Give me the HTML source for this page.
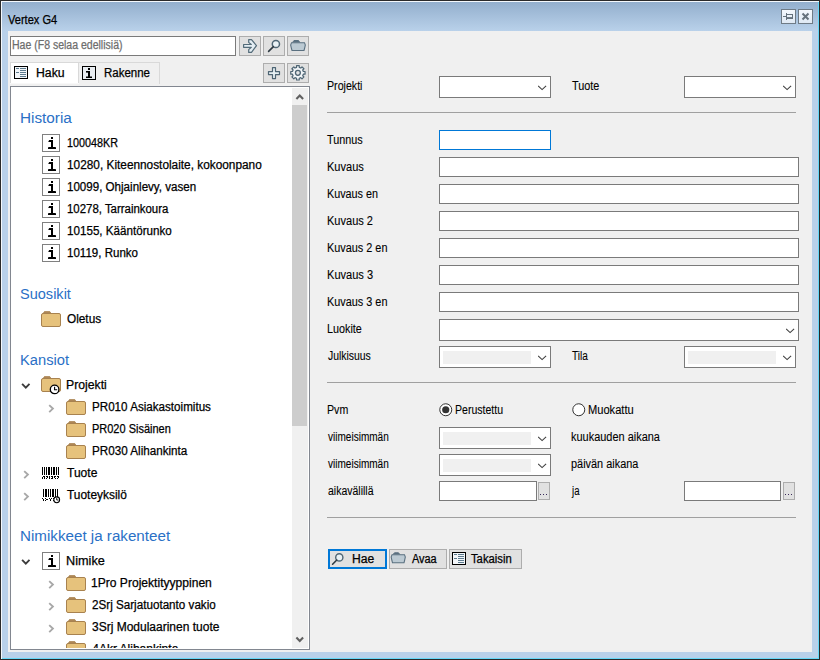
<!DOCTYPE html>
<html><head><meta charset="utf-8"><style>
html,body{margin:0;padding:0;width:820px;height:660px;overflow:hidden;background:#f0f0f0}
body{position:relative;font-family:"Liberation Sans",sans-serif}
.b{position:absolute;display:block}
.t{position:absolute;white-space:pre;font-family:"Liberation Sans",sans-serif;-webkit-text-stroke:0.25px currentColor}
</style></head><body>
<div class="b" style="left:0px;top:0px;width:820px;height:660px;background:#2a2a2a;"></div>
<div class="b" style="left:1px;top:1px;width:818px;height:658px;background:#f4f8fc;"></div>
<div class="b" style="left:2px;top:2px;width:817px;height:657px;background:#66d8f8;"></div>
<div class="b" style="left:2px;top:2px;width:816px;height:656px;background:#b9d1ea;"></div>
<div class="b" style="left:2px;top:2px;width:816px;height:29px;background:linear-gradient(#93afcd,#b9d1ea)"></div>
<div class="b" style="left:8px;top:31px;width:804px;height:621px;background:#f0f0f0;"></div>
<div class="t" style="left:8.00px;top:14px;font-size:12px;line-height:12px;color:#000;transform:scale(0.9208,1.0);transform-origin:0 10px;">Vertex G4</div>
<div class="b" style="left:781px;top:9px;width:15px;height:15px;box-sizing:border-box;border:1px solid #6f7b86;background:linear-gradient(#f4f8fd,#dfe9f4)"></div>
<div class="b" style="left:798px;top:9px;width:15px;height:15px;box-sizing:border-box;border:1px solid #6f7b86;background:linear-gradient(#f4f8fd,#dfe9f4)"></div>
<svg class="b" style="left:781px;top:9px;" width="15" height="15" viewBox="0 0 15 15"><g fill="none" stroke="#66727d"><path d="M2 7.5H5M5.5 4V11"/><rect x="5.5" y="5.5" width="6" height="4"/><path d="M5.5 8.8H11.5" stroke-width="1.4"/></g></svg>
<svg class="b" style="left:798px;top:9px;" width="15" height="15" viewBox="0 0 15 15"><path d="M4.5 4.5L10.5 10.5M10.5 4.5L4.5 10.5" stroke="#66727d" stroke-width="2" fill="none"/></svg>
<div class="b" style="left:10px;top:36px;width:226px;height:20px;background:#fff;border:1px solid #7a7a7a;box-sizing:border-box;"></div>
<div class="t" style="left:11.62px;top:39px;font-size:12px;line-height:12px;color:#6d6d6d;transform:scale(0.8765,1.0);transform-origin:0 10px;">Hae (F8 selaa edellisiä)</div>
<div class="b" style="left:239px;top:36px;width:22px;height:20px;background:#e1e1e1;border:1px solid #adadad;box-sizing:border-box;"></div>
<div class="b" style="left:263px;top:36px;width:22px;height:20px;background:#e1e1e1;border:1px solid #adadad;box-sizing:border-box;"></div>
<div class="b" style="left:287px;top:36px;width:22px;height:20px;background:#e1e1e1;border:1px solid #adadad;box-sizing:border-box;"></div>
<svg class="b" style="left:239px;top:36px;" width="22" height="20" viewBox="0 0 22 20"><path d="M4.6 8.5H12.3L9.7 6.4V3.6H12.5L17.5 9.6L12.5 16.4H9.7V13.6L12.3 11.3H4.6Z" fill="#e4eef4" stroke="#536b79" stroke-width="1.2" stroke-linejoin="round"/></svg>
<svg class="b" style="left:263px;top:36px;" width="22" height="20" viewBox="0 0 22 20"><circle cx="12.9" cy="8" r="3.6" fill="#e9f1f5" stroke="#4f6675" stroke-width="1.5"/><path d="M10.4 10.6L5.6 15.4" stroke="#2f3b44" stroke-width="1.6" stroke-linecap="round"/></svg>
<svg class="b" style="left:287px;top:36px;" width="22" height="20" viewBox="0 0 22 20"><path d="M5.5 6.5L7 4.5H11.5L12.8 6.5" fill="#5a7080" stroke="#5a7080" stroke-width="1"/><path d="M4.5 6.8H17.5Q19 9 17.8 11.5L17 14.5H5L4.2 11.5Q3 9 4.5 6.8Z" fill="#bccad3" stroke="#5a7080" stroke-width="1.1"/></svg>
<div class="b" style="left:78px;top:62px;width:82px;height:22px;background:#f0f0f0;border:1px solid #d9d9d9;box-sizing:border-box;border-bottom:none;"></div>
<div class="b" style="left:78px;top:62px;width:1px;height:22px;background:#d9d9d9"></div>
<div class="b" style="left:10px;top:62px;width:69px;height:21px;background:#fff;border:1px solid #d9d9d9;box-sizing:border-box;border-bottom:none;"></div>
<div class="b" style="left:10px;top:83px;width:69px;height:1px;background:#f8f8f8;"></div>
<svg class="b" style="left:14px;top:66px;" width="14" height="13" viewBox="0 0 14 13"><rect x="0.5" y="0.5" width="13" height="12" fill="#f3f6f9" stroke="#000"/><g fill="#5d7b8f"><rect x="2" y="2" width="3" height="1"/><rect x="2" y="6" width="3" height="1"/><rect x="6" y="2" width="6" height="1"/><rect x="6" y="4" width="6" height="1"/><rect x="6" y="6" width="6" height="1"/><rect x="6" y="8" width="6" height="1"/><rect x="6" y="10" width="6" height="1"/></g></svg>
<div class="t" style="left:36.38px;top:67px;font-size:12px;line-height:12px;color:#000;transform:scale(1.0210,1.0);transform-origin:0 10px;">Haku</div>
<svg class="b" style="left:82px;top:66px;" width="14" height="14" viewBox="0 0 14 14"><rect x="0.5" y="0.5" width="13" height="13" fill="#e9edf1" stroke="#000"/><g fill="#000"><rect x="6" y="2" width="2" height="2"/><rect x="4" y="5" width="4" height="1.6"/><rect x="6" y="5" width="2" height="7"/><rect x="4" y="10.5" width="6" height="1.5"/></g></svg>
<div class="t" style="left:103.94px;top:67px;font-size:12px;line-height:12px;color:#000;transform:scale(0.9570,1.0);transform-origin:0 10px;">Rakenne</div>
<div class="b" style="left:263px;top:63px;width:22px;height:20px;background:#e1e1e1;border:1px solid #adadad;box-sizing:border-box;"></div>
<div class="b" style="left:287px;top:63px;width:22px;height:20px;background:#e1e1e1;border:1px solid #adadad;box-sizing:border-box;"></div>
<svg class="b" style="left:263px;top:63px;" width="22" height="20" viewBox="0 0 22 20"><path d="M9.5 4.6H12.5V8.6H16.5V11.6H12.5V15.6H9.5V11.6H5.5V8.6H9.5Z" fill="#e6f0f4" stroke="#4e6574" stroke-width="1.2" stroke-linejoin="round"/></svg>
<svg class="b" style="left:287px;top:63px;" width="22" height="20" viewBox="0 0 22 20"><path d="M9.55 4.42L9.55 2.70L12.25 2.70L12.25 4.42L13.79 5.05L15.00 3.84L16.91 5.75L15.70 6.96L16.33 8.50L18.05 8.50L18.05 11.20L16.33 11.20L15.70 12.74L16.91 13.95L15.00 15.86L13.79 14.65L12.25 15.28L12.25 17.00L9.55 17.00L9.55 15.28L8.01 14.65L6.80 15.86L4.89 13.95L6.10 12.74L5.47 11.20L3.75 11.20L3.75 8.50L5.47 8.50L6.10 6.96L4.89 5.75L6.80 3.84L8.01 5.05Z" fill="#f1f5f8" stroke="#4e6574" stroke-width="1.2" stroke-linejoin="round"/><circle cx="10.9" cy="9.85" r="2.45" fill="#e2e4e6" stroke="#4e6574" stroke-width="1.3"/></svg>
<div class="b" style="left:10px;top:86px;width:300px;height:564px;background:#fff;border:1px solid #828790;box-sizing:border-box;"></div>
<div class="b" style="left:292px;top:88px;width:16px;height:560px;background:#f0f0f0;"></div>
<div class="b" style="left:292px;top:105px;width:15px;height:321px;background:#cdcdcd;"></div>
<svg class="b" style="left:292px;top:88px;" width="16" height="17" viewBox="0 0 16 17"><path d="M4.4 10.9L7.75 7.5L11.1 10.9" fill="none" stroke="#606060" stroke-width="2.1"/></svg>
<svg class="b" style="left:292px;top:630px;" width="16" height="17" viewBox="0 0 16 17"><path d="M4.4 7.6L7.75 11L11.1 7.6" fill="none" stroke="#606060" stroke-width="2.1"/></svg>
<div class="b" style="left:11px;top:87px;width:281px;height:561px;overflow:hidden">
<div class="t" style="left:8.80px;top:23px;font-size:16px;line-height:16px;color:#2a70c6;transform:scale(0.9566,0.93);transform-origin:0 13px;-webkit-text-stroke:0;">Historia</div>
<svg class="b" style="left:31px;top:47px;" width="18" height="18" viewBox="0 0 18 18"><rect x="0.5" y="0.5" width="17" height="17" fill="#fff" stroke="#808080"/><g fill="#000"><rect x="9" y="3" width="2" height="2"/><path d="M6.2 8H11V6H7.2Z"/><rect x="9" y="6" width="2" height="8"/><path d="M6 15H14V13.6L13.2 13H6.8L6 13.6Z"/></g></svg>
<div class="t" style="left:55.60px;top:50px;font-size:12px;line-height:12px;color:#000;transform:scale(0.8982,1.0);transform-origin:0 10px;">100048KR</div>
<svg class="b" style="left:31px;top:69px;" width="18" height="18" viewBox="0 0 18 18"><rect x="0.5" y="0.5" width="17" height="17" fill="#fff" stroke="#808080"/><g fill="#000"><rect x="9" y="3" width="2" height="2"/><path d="M6.2 8H11V6H7.2Z"/><rect x="9" y="6" width="2" height="8"/><path d="M6 15H14V13.6L13.2 13H6.8L6 13.6Z"/></g></svg>
<div class="t" style="left:55.51px;top:72px;font-size:12px;line-height:12px;color:#000;transform:scale(0.9862,1.0);transform-origin:0 10px;">10280, Kiteennostolaite, kokoonpano</div>
<svg class="b" style="left:31px;top:91px;" width="18" height="18" viewBox="0 0 18 18"><rect x="0.5" y="0.5" width="17" height="17" fill="#fff" stroke="#808080"/><g fill="#000"><rect x="9" y="3" width="2" height="2"/><path d="M6.2 8H11V6H7.2Z"/><rect x="9" y="6" width="2" height="8"/><path d="M6 15H14V13.6L13.2 13H6.8L6 13.6Z"/></g></svg>
<div class="t" style="left:55.54px;top:94px;font-size:12px;line-height:12px;color:#000;transform:scale(0.9644,1.0);transform-origin:0 10px;">10099, Ohjainlevy, vasen</div>
<svg class="b" style="left:31px;top:113px;" width="18" height="18" viewBox="0 0 18 18"><rect x="0.5" y="0.5" width="17" height="17" fill="#fff" stroke="#808080"/><g fill="#000"><rect x="9" y="3" width="2" height="2"/><path d="M6.2 8H11V6H7.2Z"/><rect x="9" y="6" width="2" height="8"/><path d="M6 15H14V13.6L13.2 13H6.8L6 13.6Z"/></g></svg>
<div class="t" style="left:55.55px;top:116px;font-size:12px;line-height:12px;color:#000;transform:scale(0.9517,1.0);transform-origin:0 10px;">10278, Tarrainkoura</div>
<svg class="b" style="left:31px;top:135px;" width="18" height="18" viewBox="0 0 18 18"><rect x="0.5" y="0.5" width="17" height="17" fill="#fff" stroke="#808080"/><g fill="#000"><rect x="9" y="3" width="2" height="2"/><path d="M6.2 8H11V6H7.2Z"/><rect x="9" y="6" width="2" height="8"/><path d="M6 15H14V13.6L13.2 13H6.8L6 13.6Z"/></g></svg>
<div class="t" style="left:55.53px;top:138px;font-size:12px;line-height:12px;color:#000;transform:scale(0.9696,1.0);transform-origin:0 10px;">10155, Kääntörunko</div>
<svg class="b" style="left:31px;top:157px;" width="18" height="18" viewBox="0 0 18 18"><rect x="0.5" y="0.5" width="17" height="17" fill="#fff" stroke="#808080"/><g fill="#000"><rect x="9" y="3" width="2" height="2"/><path d="M6.2 8H11V6H7.2Z"/><rect x="9" y="6" width="2" height="8"/><path d="M6 15H14V13.6L13.2 13H6.8L6 13.6Z"/></g></svg>
<div class="t" style="left:55.54px;top:160px;font-size:12px;line-height:12px;color:#000;transform:scale(0.9614,1.0);transform-origin:0 10px;">10119, Runko</div>
<div class="t" style="left:9.32px;top:199px;font-size:16px;line-height:16px;color:#2a70c6;transform:scale(0.9086,0.93);transform-origin:0 13px;-webkit-text-stroke:0;">Suosikit</div>
<svg class="b" style="left:30px;top:224px;" width="20" height="16" viewBox="0 0 20 16"><path d="M1.6 3.2L3.4 0.6H8.8L10.6 3.2Z" fill="#ae8757" stroke="#a8824f" stroke-width="0.8"/><rect x="0.5" y="2.5" width="19" height="13" rx="1.5" fill="#e6c27c" stroke="#a8824f"/></svg>
<div class="t" style="left:56.01px;top:226px;font-size:12px;line-height:12px;color:#000;transform:scale(0.9837,1.0);transform-origin:0 10px;">Oletus</div>
<div class="t" style="left:8.85px;top:265px;font-size:16px;line-height:16px;color:#2a70c6;transform:scale(0.9192,0.93);transform-origin:0 13px;-webkit-text-stroke:0;">Kansiot</div>
<svg class="b" style="left:10px;top:296px;" width="10" height="7" viewBox="0 0 10 7"><path d="M1.1 0.9L4.8 4.6L8.5 0.9" fill="none" stroke="#3c3c3c" stroke-width="1.9"/></svg>
<svg class="b" style="left:30px;top:289px;" width="20" height="16" viewBox="0 0 20 16"><path d="M1.6 3.2L3.4 0.6H8.8L10.6 3.2Z" fill="#ae8757" stroke="#a8824f" stroke-width="0.8"/><rect x="0.5" y="2.5" width="19" height="13" rx="1.5" fill="#e6c27c" stroke="#a8824f"/></svg>
<svg class="b" style="left:37px;top:296px;" width="14" height="14" viewBox="0 0 14 14"><circle cx="6.6" cy="6.4" r="4.3" fill="#fff" stroke="#000" stroke-width="1.3"/><path d="M6.6 3.8V6.8H9.2" fill="none" stroke="#000" stroke-width="1.1"/></svg>
<div class="t" style="left:55.48px;top:292px;font-size:12px;line-height:12px;color:#000;transform:scale(1.0196,1.0);transform-origin:0 10px;">Projekti</div>
<svg class="b" style="left:37px;top:317px;" width="7" height="10" viewBox="0 0 7 10"><path d="M1.2 1.1L4.9 4.6L1.2 8.1" fill="none" stroke="#a8a8a8" stroke-width="1.9"/></svg>
<svg class="b" style="left:55px;top:312px;" width="20" height="16" viewBox="0 0 20 16"><path d="M1.6 3.2L3.4 0.6H8.8L10.6 3.2Z" fill="#ae8757" stroke="#a8824f" stroke-width="0.8"/><rect x="0.5" y="2.5" width="19" height="13" rx="1.5" fill="#e6c27c" stroke="#a8824f"/></svg>
<div class="t" style="left:80.53px;top:314px;font-size:12px;line-height:12px;color:#000;transform:scale(0.9691,1.0);transform-origin:0 10px;">PR010 Asiakastoimitus</div>
<svg class="b" style="left:55px;top:334px;" width="20" height="16" viewBox="0 0 20 16"><path d="M1.6 3.2L3.4 0.6H8.8L10.6 3.2Z" fill="#ae8757" stroke="#a8824f" stroke-width="0.8"/><rect x="0.5" y="2.5" width="19" height="13" rx="1.5" fill="#e6c27c" stroke="#a8824f"/></svg>
<div class="t" style="left:80.58px;top:336px;font-size:12px;line-height:12px;color:#000;transform:scale(0.9151,1.0);transform-origin:0 10px;">PR020 Sisäinen</div>
<svg class="b" style="left:55px;top:356px;" width="20" height="16" viewBox="0 0 20 16"><path d="M1.6 3.2L3.4 0.6H8.8L10.6 3.2Z" fill="#ae8757" stroke="#a8824f" stroke-width="0.8"/><rect x="0.5" y="2.5" width="19" height="13" rx="1.5" fill="#e6c27c" stroke="#a8824f"/></svg>
<div class="t" style="left:80.53px;top:358px;font-size:12px;line-height:12px;color:#000;transform:scale(0.9722,1.0);transform-origin:0 10px;">PR030 Alihankinta</div>
<svg class="b" style="left:12px;top:383px;" width="7" height="10" viewBox="0 0 7 10"><path d="M1.2 1.1L4.9 4.6L1.2 8.1" fill="none" stroke="#a8a8a8" stroke-width="1.9"/></svg>
<svg class="b" style="left:31px;top:380px;" width="18" height="12" viewBox="0 0 18 12"><g fill="#000" shape-rendering="crispEdges"><rect x="0" y="0" width="1" height="8"/><rect x="2" y="0" width="1" height="8"/><rect x="4" y="0" width="1" height="8"/><rect x="6" y="0" width="2" height="8"/><rect x="9" y="0" width="1" height="8"/><rect x="11" y="0" width="2" height="8"/><rect x="14" y="0" width="1" height="8"/><rect x="16" y="0" width="1" height="8"/><rect x="0" y="10" width="1" height="2"/><rect x="1" y="9" width="1" height="1"/><rect x="2" y="9" width="1" height="3"/><rect x="4" y="9" width="2" height="1"/><rect x="5" y="10" width="1" height="1"/><rect x="4" y="11" width="1" height="1"/><rect x="7" y="9" width="1" height="3"/><rect x="9" y="9" width="2" height="1"/><rect x="10" y="10" width="1" height="1"/><rect x="9" y="11" width="2" height="1"/><rect x="12" y="9" width="2" height="1"/><rect x="12" y="10" width="1" height="1"/><rect x="13" y="11" width="1" height="1"/><rect x="15" y="9" width="2" height="1"/><rect x="16" y="10" width="1" height="1"/><rect x="15" y="11" width="1" height="1"/></g></svg>
<div class="t" style="left:56.25px;top:380px;font-size:12px;line-height:12px;color:#000;transform:scale(1.0034,1.0);transform-origin:0 10px;">Tuote</div>
<svg class="b" style="left:12px;top:405px;" width="7" height="10" viewBox="0 0 7 10"><path d="M1.2 1.1L4.9 4.6L1.2 8.1" fill="none" stroke="#a8a8a8" stroke-width="1.9"/></svg>
<svg class="b" style="left:31px;top:402px;" width="20" height="16" viewBox="0 0 20 16"><g fill="#000" shape-rendering="crispEdges"><rect x="1" y="0" width="1" height="8"/><rect x="3" y="0" width="2" height="8"/><rect x="6" y="0" width="1" height="8"/><rect x="8" y="0" width="1" height="8"/><rect x="10" y="0" width="2" height="8"/><rect x="13" y="0" width="1" height="8"/><rect x="15" y="0" width="1" height="8"/><rect x="0" y="9" width="1" height="1"/><rect x="1" y="10" width="1" height="2"/><rect x="3" y="9" width="1" height="1"/><rect x="4" y="10" width="1" height="1"/><rect x="3" y="11" width="1" height="1"/><rect x="5" y="10" width="1" height="1"/><rect x="7" y="9" width="1" height="1"/><rect x="8" y="10" width="1" height="2"/><rect x="9" y="9" width="1" height="1"/><rect x="11" y="9" width="1" height="1"/><rect x="11" y="11" width="1" height="1"/></g><circle cx="14.7" cy="10.8" r="2.9" fill="#fff" stroke="#000" stroke-width="1.1"/><path d="M14.7 8.9V11H16.4" fill="none" stroke="#000" stroke-width="0.9"/></svg>
<div class="t" style="left:56.25px;top:402px;font-size:12px;line-height:12px;color:#000;transform:scale(0.9933,1.0);transform-origin:0 10px;">Tuoteyksilö</div>
<div class="t" style="left:8.81px;top:441px;font-size:16px;line-height:16px;color:#2a70c6;transform:scale(0.9484,0.93);transform-origin:0 13px;-webkit-text-stroke:0;">Nimikkeet ja rakenteet</div>
<svg class="b" style="left:10px;top:472px;" width="10" height="7" viewBox="0 0 10 7"><path d="M1.1 0.9L4.8 4.6L8.5 0.9" fill="none" stroke="#3c3c3c" stroke-width="1.9"/></svg>
<svg class="b" style="left:31px;top:465px;" width="18" height="18" viewBox="0 0 18 18"><rect x="0.5" y="0.5" width="17" height="17" fill="#fff" stroke="#808080"/><g fill="#000"><rect x="9" y="3" width="2" height="2"/><path d="M6.2 8H11V6H7.2Z"/><rect x="9" y="6" width="2" height="8"/><path d="M6 15H14V13.6L13.2 13H6.8L6 13.6Z"/></g></svg>
<div class="t" style="left:55.44px;top:468px;font-size:12px;line-height:12px;color:#000;transform:scale(1.0582,1.0);transform-origin:0 10px;">Nimike</div>
<svg class="b" style="left:37px;top:493px;" width="7" height="10" viewBox="0 0 7 10"><path d="M1.2 1.1L4.9 4.6L1.2 8.1" fill="none" stroke="#a8a8a8" stroke-width="1.9"/></svg>
<svg class="b" style="left:55px;top:488px;" width="20" height="16" viewBox="0 0 20 16"><path d="M1.6 3.2L3.4 0.6H8.8L10.6 3.2Z" fill="#ae8757" stroke="#a8824f" stroke-width="0.8"/><rect x="0.5" y="2.5" width="19" height="13" rx="1.5" fill="#e6c27c" stroke="#a8824f"/></svg>
<div class="t" style="left:80.49px;top:490px;font-size:12px;line-height:12px;color:#000;transform:scale(1.0063,1.0);transform-origin:0 10px;">1Pro Projektityyppinen</div>
<svg class="b" style="left:37px;top:515px;" width="7" height="10" viewBox="0 0 7 10"><path d="M1.2 1.1L4.9 4.6L1.2 8.1" fill="none" stroke="#a8a8a8" stroke-width="1.9"/></svg>
<svg class="b" style="left:55px;top:510px;" width="20" height="16" viewBox="0 0 20 16"><path d="M1.6 3.2L3.4 0.6H8.8L10.6 3.2Z" fill="#ae8757" stroke="#a8824f" stroke-width="0.8"/><rect x="0.5" y="2.5" width="19" height="13" rx="1.5" fill="#e6c27c" stroke="#a8824f"/></svg>
<div class="t" style="left:81.01px;top:512px;font-size:12px;line-height:12px;color:#000;transform:scale(0.9715,1.0);transform-origin:0 10px;">2Srj Sarjatuotanto vakio</div>
<svg class="b" style="left:37px;top:537px;" width="7" height="10" viewBox="0 0 7 10"><path d="M1.2 1.1L4.9 4.6L1.2 8.1" fill="none" stroke="#a8a8a8" stroke-width="1.9"/></svg>
<svg class="b" style="left:55px;top:532px;" width="20" height="16" viewBox="0 0 20 16"><path d="M1.6 3.2L3.4 0.6H8.8L10.6 3.2Z" fill="#ae8757" stroke="#a8824f" stroke-width="0.8"/><rect x="0.5" y="2.5" width="19" height="13" rx="1.5" fill="#e6c27c" stroke="#a8824f"/></svg>
<div class="t" style="left:81.00px;top:534px;font-size:12px;line-height:12px;color:#000;">3Srj Modulaarinen tuote</div>
<svg class="b" style="left:55px;top:554px;" width="20" height="16" viewBox="0 0 20 16"><path d="M1.6 3.2L3.4 0.6H8.8L10.6 3.2Z" fill="#ae8757" stroke="#a8824f" stroke-width="0.8"/><rect x="0.5" y="2.5" width="19" height="13" rx="1.5" fill="#e6c27c" stroke="#a8824f"/></svg>
<div class="t" style="left:81.25px;top:556px;font-size:12px;line-height:12px;color:#000;">4Akr Alihankinta</div>
</div>
<div class="t" style="left:327.11px;top:80px;font-size:12px;line-height:12px;color:#000;transform:scale(0.8863,1.0);transform-origin:0 10px;-webkit-text-stroke:0.1px #000;">Projekti</div>
<div class="b" style="left:439px;top:76px;width:112px;height:22px;background:#fff;border:1px solid #7a7a7a;box-sizing:border-box;"></div>
<svg class="b" style="left:538px;top:85px;" width="9" height="6" viewBox="0 0 9 6"><path d="M0.1 0.8L4.1 4.6L8.1 0.8" fill="none" stroke="#404040" stroke-width="1.1"/></svg>
<div class="t" style="left:571.77px;top:80px;font-size:12px;line-height:12px;color:#000;transform:scale(0.9051,1.0);transform-origin:0 10px;-webkit-text-stroke:0.1px #000;">Tuote</div>
<div class="b" style="left:684px;top:76px;width:112px;height:22px;background:#fff;border:1px solid #7a7a7a;box-sizing:border-box;"></div>
<svg class="b" style="left:783px;top:85px;" width="9" height="6" viewBox="0 0 9 6"><path d="M0.1 0.8L4.1 4.6L8.1 0.8" fill="none" stroke="#404040" stroke-width="1.1"/></svg>
<div class="b" style="left:327px;top:112px;width:469px;height:1px;background:#a0a0a0;"></div>
<div class="t" style="left:327.17px;top:134px;font-size:12px;line-height:12px;color:#000;transform:scale(0.9000,1.0);transform-origin:0 10px;-webkit-text-stroke:0.1px #000;">Tunnus</div>
<div class="b" style="left:439px;top:130px;width:112px;height:20px;background:#fff;border:1px solid #0078d7;box-sizing:border-box;"></div>
<div class="t" style="left:327.08px;top:161px;font-size:12px;line-height:12px;color:#000;transform:scale(0.9195,1.0);transform-origin:0 10px;-webkit-text-stroke:0.1px #000;">Kuvaus</div>
<div class="b" style="left:439px;top:157px;width:360px;height:20px;background:#fff;border:1px solid #7a7a7a;box-sizing:border-box;"></div>
<div class="t" style="left:327.10px;top:188px;font-size:12px;line-height:12px;color:#000;transform:scale(0.9000,1.0);transform-origin:0 10px;-webkit-text-stroke:0.1px #000;">Kuvaus en</div>
<div class="b" style="left:439px;top:184px;width:360px;height:20px;background:#fff;border:1px solid #7a7a7a;box-sizing:border-box;"></div>
<div class="t" style="left:327.08px;top:215px;font-size:12px;line-height:12px;color:#000;transform:scale(0.9196,1.0);transform-origin:0 10px;-webkit-text-stroke:0.1px #000;">Kuvaus 2</div>
<div class="b" style="left:439px;top:211px;width:360px;height:20px;background:#fff;border:1px solid #7a7a7a;box-sizing:border-box;"></div>
<div class="t" style="left:327.09px;top:242px;font-size:12px;line-height:12px;color:#000;transform:scale(0.9062,1.0);transform-origin:0 10px;-webkit-text-stroke:0.1px #000;">Kuvaus 2 en</div>
<div class="b" style="left:439px;top:238px;width:360px;height:20px;background:#fff;border:1px solid #7a7a7a;box-sizing:border-box;"></div>
<div class="t" style="left:327.08px;top:269px;font-size:12px;line-height:12px;color:#000;transform:scale(0.9216,1.0);transform-origin:0 10px;-webkit-text-stroke:0.1px #000;">Kuvaus 3</div>
<div class="b" style="left:439px;top:265px;width:360px;height:20px;background:#fff;border:1px solid #7a7a7a;box-sizing:border-box;"></div>
<div class="t" style="left:327.09px;top:296px;font-size:12px;line-height:12px;color:#000;transform:scale(0.9062,1.0);transform-origin:0 10px;-webkit-text-stroke:0.1px #000;">Kuvaus 3 en</div>
<div class="b" style="left:439px;top:292px;width:360px;height:20px;background:#fff;border:1px solid #7a7a7a;box-sizing:border-box;"></div>
<div class="t" style="left:327.10px;top:323px;font-size:12px;line-height:12px;color:#000;transform:scale(0.8993,1.0);transform-origin:0 10px;-webkit-text-stroke:0.1px #000;">Luokite</div>
<div class="b" style="left:439px;top:319px;width:360px;height:22px;background:#fff;border:1px solid #7a7a7a;box-sizing:border-box;"></div>
<svg class="b" style="left:786px;top:328px;" width="9" height="6" viewBox="0 0 9 6"><path d="M0.1 0.8L4.1 4.6L8.1 0.8" fill="none" stroke="#404040" stroke-width="1.1"/></svg>
<div class="t" style="left:327.78px;top:350px;font-size:12px;line-height:12px;color:#000;transform:scale(0.8677,1.0);transform-origin:0 10px;-webkit-text-stroke:0.1px #000;">Julkisuus</div>
<div class="b" style="left:439px;top:346px;width:112px;height:22px;background:#fff;border:1px solid #7a7a7a;box-sizing:border-box;"></div>
<div class="b" style="left:443px;top:351px;width:88px;height:13px;background:#f0f0f0;"></div>
<svg class="b" style="left:538px;top:355px;" width="9" height="6" viewBox="0 0 9 6"><path d="M0.1 0.8L4.1 4.6L8.1 0.8" fill="none" stroke="#404040" stroke-width="1.1"/></svg>
<div class="t" style="left:571.79px;top:350px;font-size:12px;line-height:12px;color:#000;transform:scale(0.8373,1.0);transform-origin:0 10px;-webkit-text-stroke:0.1px #000;">Tila</div>
<div class="b" style="left:684px;top:346px;width:112px;height:22px;background:#fff;border:1px solid #7a7a7a;box-sizing:border-box;"></div>
<div class="b" style="left:688px;top:351px;width:88px;height:13px;background:#f0f0f0;"></div>
<svg class="b" style="left:783px;top:355px;" width="9" height="6" viewBox="0 0 9 6"><path d="M0.1 0.8L4.1 4.6L8.1 0.8" fill="none" stroke="#404040" stroke-width="1.1"/></svg>
<div class="b" style="left:327px;top:382px;width:469px;height:1px;background:#a0a0a0;"></div>
<div class="t" style="left:327.11px;top:404px;font-size:12px;line-height:12px;color:#000;transform:scale(0.8854,1.0);transform-origin:0 10px;-webkit-text-stroke:0.1px #000;">Pvm</div>
<svg class="b" style="left:439px;top:403px;" width="14" height="14" viewBox="0 0 14 14"><circle cx="6.75" cy="6.75" r="6" fill="#fff" stroke="#333" stroke-width="1"/><circle cx="6.75" cy="6.75" r="3.6" fill="#333"/></svg>
<div class="t" style="left:454.62px;top:404px;font-size:12px;line-height:12px;color:#000;transform:scale(0.8792,1.0);transform-origin:0 10px;-webkit-text-stroke:0.1px #000;">Perustettu</div>
<svg class="b" style="left:572px;top:403px;" width="14" height="14" viewBox="0 0 14 14"><circle cx="6.75" cy="6.75" r="6" fill="#fff" stroke="#333" stroke-width="1"/></svg>
<div class="t" style="left:587.87px;top:404px;font-size:12px;line-height:12px;color:#000;transform:scale(0.9263,1.0);transform-origin:0 10px;-webkit-text-stroke:0.1px #000;">Muokattu</div>
<div class="t" style="left:328.00px;top:431px;font-size:12px;line-height:12px;color:#000;transform:scale(0.8361,1.0);transform-origin:0 10px;-webkit-text-stroke:0.1px #000;">viimeisimmän</div>
<div class="b" style="left:439px;top:427px;width:112px;height:22px;background:#fff;border:1px solid #7a7a7a;box-sizing:border-box;"></div>
<div class="b" style="left:443px;top:432px;width:88px;height:13px;background:#f0f0f0;"></div>
<svg class="b" style="left:538px;top:436px;" width="9" height="6" viewBox="0 0 9 6"><path d="M0.1 0.8L4.1 4.6L8.1 0.8" fill="none" stroke="#404040" stroke-width="1.1"/></svg>
<div class="t" style="left:570.82px;top:431px;font-size:12px;line-height:12px;color:#000;transform:scale(0.9127,1.0);transform-origin:0 10px;-webkit-text-stroke:0.1px #000;">kuukauden aikana</div>
<div class="t" style="left:328.00px;top:458px;font-size:12px;line-height:12px;color:#000;transform:scale(0.8361,1.0);transform-origin:0 10px;-webkit-text-stroke:0.1px #000;">viimeisimmän</div>
<div class="b" style="left:439px;top:454px;width:112px;height:22px;background:#fff;border:1px solid #7a7a7a;box-sizing:border-box;"></div>
<div class="b" style="left:443px;top:459px;width:88px;height:13px;background:#f0f0f0;"></div>
<svg class="b" style="left:538px;top:463px;" width="9" height="6" viewBox="0 0 9 6"><path d="M0.1 0.8L4.1 4.6L8.1 0.8" fill="none" stroke="#404040" stroke-width="1.1"/></svg>
<div class="t" style="left:570.82px;top:458px;font-size:12px;line-height:12px;color:#000;transform:scale(0.9092,1.0);transform-origin:0 10px;-webkit-text-stroke:0.1px #000;">päivän aikana</div>
<div class="t" style="left:327.56px;top:485px;font-size:12px;line-height:12px;color:#000;transform:scale(0.8738,1.0);transform-origin:0 10px;-webkit-text-stroke:0.1px #000;">aikavälillä</div>
<div class="b" style="left:439px;top:481px;width:98px;height:20px;background:#fff;border:1px solid #7a7a7a;box-sizing:border-box;"></div>
<div class="b" style="left:538px;top:482px;width:12px;height:18px;background:#e1e1e1;border:1px solid #adadad;box-sizing:border-box;"></div>
<svg class="b" style="left:538px;top:482px;" width="12" height="18" viewBox="0 0 12 18"><g fill="#3a2a5a"><rect x="2" y="12" width="1" height="1"/><rect x="5" y="12" width="1" height="1"/><rect x="8" y="12" width="1" height="1"/></g></svg>
<div class="t" style="left:571.70px;top:485px;font-size:12px;line-height:12px;color:#000;transform:scale(0.8000,1.0);transform-origin:0 10px;-webkit-text-stroke:0.1px #000;">ja</div>
<div class="b" style="left:684px;top:481px;width:97px;height:20px;background:#fff;border:1px solid #7a7a7a;box-sizing:border-box;"></div>
<div class="b" style="left:783px;top:482px;width:12px;height:18px;background:#e1e1e1;border:1px solid #adadad;box-sizing:border-box;"></div>
<svg class="b" style="left:783px;top:482px;" width="12" height="18" viewBox="0 0 12 18"><g fill="#3a2a5a"><rect x="2" y="12" width="1" height="1"/><rect x="5" y="12" width="1" height="1"/><rect x="8" y="12" width="1" height="1"/></g></svg>
<div class="b" style="left:327px;top:517px;width:469px;height:1px;background:#a0a0a0;"></div>
<div class="b" style="left:328px;top:549px;width:59px;height:20px;background:#e1e1e1;border:2px solid #0078d7;box-sizing:border-box;"></div>
<svg class="b" style="left:328px;top:549px;" width="20" height="20" viewBox="0 0 20 20"><circle cx="11.3" cy="8.4" r="3.6" fill="#e9f1f5" stroke="#4f6675" stroke-width="1.4"/><path d="M8.8 11L4.6 15.2" stroke="#2f3b44" stroke-width="1.6" stroke-linecap="round"/></svg>
<div class="t" style="left:352.49px;top:553px;font-size:12px;line-height:12px;color:#000;transform:scale(1.0098,1.0);transform-origin:0 10px;">Hae</div>
<div class="b" style="left:389px;top:549px;width:58px;height:20px;background:#e1e1e1;border:1px solid #adadad;box-sizing:border-box;"></div>
<svg class="b" style="left:389px;top:549px;" width="20" height="20" viewBox="0 0 20 20"><path d="M4 5.5L5.5 3.8H9.5L10.8 5.5" fill="#5a7080" stroke="#5a7080" stroke-width="1"/><path d="M3 5.8H15.5Q17 8 15.8 10.5L15 13.8H3.5L2.7 10.5Q1.5 8 3 5.8Z" fill="#bccad3" stroke="#5a7080" stroke-width="1.1"/></svg>
<div class="t" style="left:411.50px;top:553px;font-size:12px;line-height:12px;color:#000;transform:scale(0.9101,1.0);transform-origin:0 10px;">Avaa</div>
<div class="b" style="left:449px;top:549px;width:73px;height:20px;background:#e1e1e1;border:1px solid #adadad;box-sizing:border-box;"></div>
<svg class="b" style="left:452px;top:552px;" width="14" height="13" viewBox="0 0 14 13"><rect x="0.5" y="0.5" width="13" height="12" fill="#f3f6f9" stroke="#000"/><g fill="#5d7b8f"><rect x="2" y="2" width="3" height="1"/><rect x="2" y="6" width="3" height="1"/><rect x="6" y="2" width="6" height="1"/><rect x="6" y="4" width="6" height="1"/><rect x="6" y="6" width="6" height="1"/><rect x="6" y="8" width="6" height="1"/><rect x="6" y="10" width="6" height="1"/></g></svg>
<div class="t" style="left:471.27px;top:553px;font-size:12px;line-height:12px;color:#000;transform:scale(0.9373,1.0);transform-origin:0 10px;">Takaisin</div>
</body></html>
